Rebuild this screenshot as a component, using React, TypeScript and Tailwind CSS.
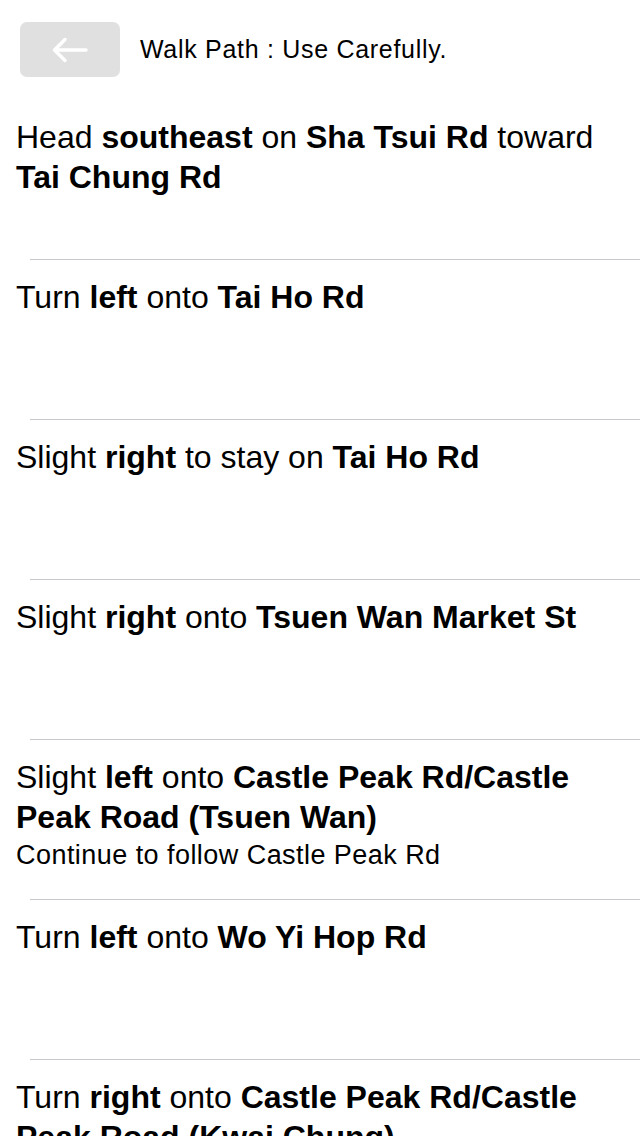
import type { ReactNode } from 'react';

interface Step {
  text: ReactNode;
  note?: string;
}

const STEPS: Step[] = [
  {
    text: (
      <>
        Head <b>southeast</b> on <b>Sha Tsui Rd</b> toward <b>Tai Chung Rd</b>
      </>
    ),
  },
  {
    text: (
      <>
        Turn <b>left</b> onto <b>Tai Ho Rd</b>
      </>
    ),
  },
  {
    text: (
      <>
        Slight <b>right</b> to stay on <b>Tai Ho Rd</b>
      </>
    ),
  },
  {
    text: (
      <>
        Slight <b>right</b> onto <b>Tsuen Wan Market St</b>
      </>
    ),
  },
  {
    text: (
      <>
        Slight <b>left</b> onto <b>Castle Peak Rd/Castle Peak Road (Tsuen Wan)</b>
      </>
    ),
    note: 'Continue to follow Castle Peak Rd',
  },
  {
    text: (
      <>
        Turn <b>left</b> onto <b>Wo Yi Hop Rd</b>
      </>
    ),
  },
  {
    text: (
      <>
        Turn <b>right</b> onto <b>Castle Peak Rd/Castle Peak Road (Kwai Chung)</b>
      </>
    ),
  },
];

function BackArrow() {
  return (
    <svg width="36" height="26" viewBox="0 0 36 26" fill="none">
      <path
        d="M34 13H3M13 2.5L2.5 13L13 23.5"
        stroke="white"
        strokeWidth="3.5"
        strokeLinecap="round"
        strokeLinejoin="round"
      />
    </svg>
  );
}

export default function App() {
  return (
    <div
      className="w-[640px] h-[1136px] overflow-hidden bg-white text-black"
      style={{ fontFamily: '"Liberation Sans", Arial, sans-serif' }}
    >
      <div className="h-[100px] flex items-center pl-[20px] pb-[1px]">
        <button className="w-[100px] h-[55px] rounded-[7px] bg-[#e0e0e0] flex items-center justify-center">
          <BackArrow />
        </button>
        <span className="ml-[20px] text-[25px] leading-none tracking-[0.7px]">Walk Path : Use Carefully.</span>
      </div>
      {STEPS.map((step, i) => (
        <div key={i} className="h-[160px] flex flex-col">
          <div className="flex-1 pt-[17px] pl-[16px] pr-[16px]">
            <div className="text-[32px] leading-[40px]">{step.text}</div>
            {step.note && (
              <div className="text-[27px] leading-[37px] tracking-[0.45px]">{step.note}</div>
            )}
          </div>
          <div className="h-px ml-[30px] bg-[#c8c7cc]" />
        </div>
      ))}
    </div>
  );
}
